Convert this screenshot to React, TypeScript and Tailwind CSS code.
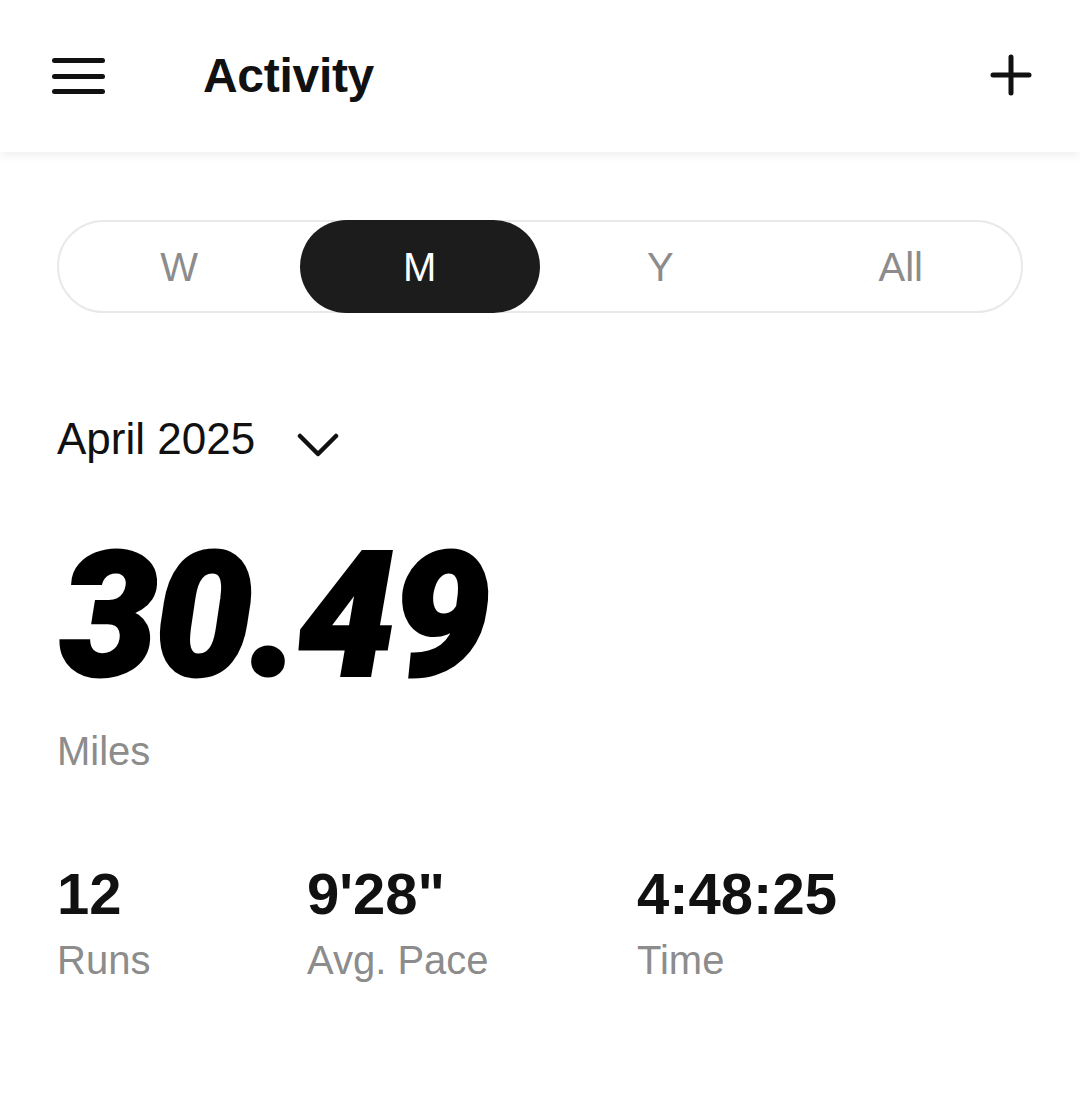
import { useState } from 'react';

const tabs = ['W', 'M', 'Y', 'All'];

const stats = [
  { value: '12', label: 'Runs', width: 'w-[250px]' },
  { value: `9'28"`, label: 'Avg. Pace', width: 'w-[330px]' },
  { value: '4:48:25', label: 'Time', width: 'w-[250px]' },
];

export default function App() {
  const [active, setActive] = useState('M');

  return (
    <div className="min-h-[1104px] w-[1080px] bg-white text-[#111] font-['Liberation_Sans',Arial,sans-serif]">
      <header className="relative z-10 flex h-[152px] items-center bg-white pl-[52px] pr-[48px] shadow-[0_3px_10px_rgba(0,0,0,0.07)]">
        <button className="flex h-[40px] w-[53px] flex-col justify-between py-[2px]">
          <span className="h-[5px] w-full rounded-full bg-[#111]" />
          <span className="h-[5px] w-full rounded-full bg-[#111]" />
          <span className="h-[5px] w-full rounded-full bg-[#111]" />
        </button>
        <h1 className="ml-[98px] text-[48px] font-bold leading-none tracking-[-0.3px]">Activity</h1>
        <button className="ml-auto -mt-[3px]">
          <svg width="42" height="42" viewBox="0 0 42 42" fill="none" stroke="#111" strokeWidth="5" strokeLinecap="round">
            <path d="M21 3v36M3 21h36" />
          </svg>
        </button>
      </header>

      <main className="px-[57px]">
        <div className="mt-[68px] flex h-[93px] w-[966px] rounded-full border-2 border-[#e9e9e9]">
          {tabs.map((t) => (
            <button
              key={t}
              onClick={() => setActive(t)}
              className={
                active === t
                  ? '-my-[2px] flex flex-1 items-center justify-center rounded-full bg-[#1c1c1c] text-[40px] leading-none text-white'
                  : 'flex flex-1 items-center justify-center text-[40px] leading-none text-[#8c8c8c]'
              }
            >
              {t}
            </button>
          ))}
        </div>

        <div className="mt-[104px] flex items-center">
          <span className="text-[44px] leading-[44px]">April 2025</span>
          <svg className="ml-[42px] mt-[12px]" width="42" height="26" viewBox="0 0 42 26" fill="none" stroke="#111" strokeWidth="4.5" strokeLinecap="round" strokeLinejoin="round">
            <path d="M3 4l18 18L39 4" />
          </svg>
        </div>

        <div className="ml-[3px] mt-[68px] h-[174px] font-['Roboto',sans-serif] text-[174px] font-black italic leading-[174px] tracking-[-3px] text-black [-webkit-text-stroke:3px_#000]">
          30.49
        </div>

        <div className="mt-[28px] text-[40px] leading-[40px] text-[#8c8c8c]">Miles</div>

        <div className="mt-[94px] flex">
          {stats.map((s) => (
            <div key={s.label} className={s.width}>
              <div className="text-[58px] font-bold leading-[58px]">{s.value}</div>
              <div className="mt-[17px] text-[40px] leading-[40px] text-[#8c8c8c]">{s.label}</div>
            </div>
          ))}
        </div>
      </main>
    </div>
  );
}
